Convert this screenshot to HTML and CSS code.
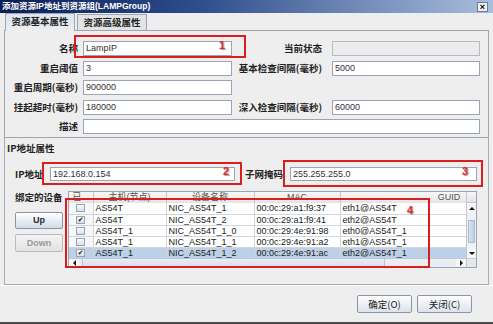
FILE: index.html
```html
<!DOCTYPE html>
<html lang="zh-CN">
<head>
    <meta charset="UTF-8">
    <title>添加资源IP地址到资源组</title>
    <link rel="stylesheet" href="styles.css">
</head>
<body>
<div class="window">
    <div class="titlebar">
        <span class="title">添加资源IP地址到资源组(LAMPGroup)</span>
        <span class="close">×</span>
    </div>

    <div class="tabs">
        <div class="tab active">资源基本属性</div>
        <div class="tab">资源高级属性</div>
    </div>

    <div class="tabpanel">
        <div class="form">
            <div class="lbl">名称</div>
            <div class="field">LampIP</div>
            <div class="lbl r">当前状态</div>
            <div class="field off"></div>

            <div class="lbl">重启阈值</div>
            <div class="field">3</div>
            <div class="lbl r">基本检查间隔(毫秒)</div>
            <div class="field">5000</div>

            <div class="lbl">重启周期(毫秒)</div>
            <div class="field">900000</div>
            <div></div>
            <div></div>

            <div class="lbl">挂起超时(毫秒)</div>
            <div class="field">180000</div>
            <div class="lbl r">深入检查间隔(毫秒)</div>
            <div class="field">60000</div>

            <div class="lbl">描述</div>
            <div class="field wide"></div>
        </div>
    </div>

    <div class="ipsec">
        <div class="sechead">IP地址属性</div>

        <div class="iprow">
            <div class="iplbl">IP地址</div>
            <div class="field ipfield">192.168.0.154</div>
            <div class="iplbl mask">子网掩码</div>
            <div class="field maskfield">255.255.255.0</div>
        </div>

        <div class="devices">
            <div class="devleft">
                <div class="devlbl">绑定的设备</div>
                <div class="btn up">Up</div>
                <div class="btn down dis">Down</div>
            </div>

            <div class="grid">
                <div class="view">
                    <table class="head">
                        <colgroup><col class="c1"><col class="c2"><col class="c3"><col class="c4"><col class="c5"></colgroup>
                        <tr><th>已...</th><th>主机(节点)</th><th>设备名称</th><th>MAC</th><th>GUID</th></tr>
                    </table>
                </div>
                <div class="hcorner"></div>

                <div class="view">
                    <table class="rows">
                        <colgroup><col class="c1"><col class="c2"><col class="c3"><col class="c4"><col class="c5"></colgroup>
                        <tr><td class="ck"><span class="box"></span></td><td>AS54T</td><td>NIC_AS54T_1</td><td>00:0c:29:a1:f9:37</td><td>eth1@AS54T</td></tr>
                        <tr><td class="ck"><span class="box on">✔</span></td><td>AS54T</td><td>NIC_AS54T_2</td><td>00:0c:29:a1:f9:41</td><td>eth2@AS54T</td></tr>
                        <tr><td class="ck"><span class="box"></span></td><td>AS54T_1</td><td>NIC_AS54T_1_0</td><td>00:0c:29:4e:91:98</td><td>eth0@AS54T_1</td></tr>
                        <tr><td class="ck"><span class="box"></span></td><td>AS54T_1</td><td>NIC_AS54T_1_1</td><td>00:0c:29:4e:91:a2</td><td>eth1@AS54T_1</td></tr>
                        <tr class="sel"><td class="ck"><span class="box on">✔</span></td><td>AS54T_1</td><td>NIC_AS54T_1_2</td><td>00:0c:29:4e:91:ac</td><td>eth2@AS54T_1</td></tr>
                    </table>
                </div>
                <div class="vbar">
                    <div class="arrow"><span class="tri-up"></span></div>
                    <div class="vtrack"><div class="vthumb"></div></div>
                    <div class="arrow"><span class="tri-down"></span></div>
                </div>

                <div class="hbar">
                    <div class="arrow"><span class="tri-left"></span></div>
                    <div class="htrack"><div class="hthumb"></div></div>
                    <div class="arrow"><span class="tri-right"></span></div>
                </div>
                <div class="corner"></div>
            </div>
        </div>
    </div>

    <div class="footer">
        <div class="fbtn">确定(O)</div>
        <div class="fbtn">关闭(C)</div>
    </div>

    <!-- annotation boxes drawn over the dialog -->
    <div class="mark m1"><span class="num n1">1</span></div>
    <div class="mark m2"><span class="num n2">2</span></div>
    <div class="mark m3"><span class="num n3">3</span></div>
    <div class="mark m4"><span class="num n4">4</span></div>
</div>
</body>
</html>
```

FILE: styles.css
```css
* {
    box-sizing: border-box;
}
body {
    margin: 0;
    background: #eeeeee;
    font-family: "Liberation Sans", "Noto Sans CJK SC", sans-serif;
    font-size: 9px;
    color: #222;
}
.window {
    position: relative;
    width: 493px;
    height: 324px;
    background: #eeeeee;
    border-bottom: 2px solid #4a4a4a;
    display: flex;
    flex-direction: column;
    overflow: hidden;
}
.titlebar {
    height: 13px;
    flex: none;
    display: flex;
    align-items: center;
    justify-content: space-between;
    padding: 0 5px 0 2px;
    background: linear-gradient(90deg, #0b1d55 0%, #2f4c8c 40%, #a8bedc 100%);
}
.title {
    color: #fff;
    font: bold 8.5px/13px "Liberation Sans", "Noto Sans CJK SC", sans-serif;
}
.close {
    width: 11px;
    height: 10px;
    background: #eef1f6;
    border: 1px solid #6c7a92;
    font: bold 9px/8px "Liberation Sans", sans-serif;
    color: #000;
    text-align: center;
}
.tabs {
    display: flex;
    flex: none;
    height: 17px;
    margin: 0 4px;
    padding-left: 1px;
    gap: 2px;
    align-items: flex-end;
}
.tab {
    width: 70px;
    height: 16px;
    border: 1px solid #9da6b3;
    border-bottom: none;
    background: #e3e3e3;
    font: bold 9.5px/15px "Noto Sans CJK SC", sans-serif;
    text-align: center;
    color: #222;
}
.tab.active {
    height: 18px;
    margin-bottom: -1px;
    position: relative;
    z-index: 1;
    background: linear-gradient(#dbe5f0, #eeeeee);
}
.tabpanel {
    flex: none;
    margin: 0 4px;
    border: 1px solid #9da6b3;
    padding: 10px 0 3px;
}
.form {
    display: grid;
    grid-template-columns: 78px 149px 100px 148px;
    grid-auto-rows: 15px;
    row-gap: 4.5px;
}
.lbl {
    font: bold 9.5px/15px "Noto Sans CJK SC", sans-serif;
    text-align: right;
    padding-right: 5px;
    white-space: nowrap;
}
.lbl.r {
    padding-right: 10px;
}
.field {
    border: 1px solid #9aa4b2;
    background: #fff;
    font: 9px/13px "Liberation Sans", sans-serif;
    padding-left: 2px;
    color: #333;
}
.field.off {
    background: #ececec;
    border-color: #b5bcc6;
}
.wide {
    grid-column: 2 / 5;
}
.ipsec {
    flex: 1;
    margin: 0 4px;
    border: 1px solid #a9adb3;
    border-top: none;
    padding: 4px 0 0;
}
.sechead {
    font: bold 9.5px/12px "Noto Sans CJK SC", sans-serif;
    padding-left: 2px;
}
.iprow {
    display: flex;
    margin-top: 13px;
    padding-left: 10px;
    height: 14px;
}
.iplbl {
    width: 35px;
    font: bold 9.5px/14px "Noto Sans CJK SC", sans-serif;
    white-space: nowrap;
}
.iplbl.mask {
    width: 45px;
    margin-left: 10px;
}
.ipfield {
    width: 185px;
    line-height: 12px;
}
.maskfield {
    width: 187px;
    line-height: 12px;
}
.devices {
    display: flex;
    margin-top: 10px;
    padding-left: 10px;
}
.devleft {
    width: 53px;
}
.devlbl {
    font: bold 9.5px/12px "Noto Sans CJK SC", sans-serif;
    white-space: nowrap;
}
.btn {
    width: 48px;
    height: 17px;
    border: 1px solid #8d96a4;
    border-radius: 2px;
    background: linear-gradient(#ffffff, #d3dbe7);
    font: bold 9px/15px "Liberation Sans", sans-serif;
    color: #1f2a3a;
    text-align: center;
}
.btn.up {
    margin-top: 9px;
}
.btn.down {
    margin-top: 5px;
    height: 18px;
    line-height: 16px;
}
.btn.dis {
    color: #9a9a9a;
    background: linear-gradient(#f4f4f4, #e2e2e2);
    border-color: #b8bcc2;
}
.grid {
    width: 409px;
    height: 77px;
    border: 1px solid #9aa4b2;
    background: #fff;
    display: grid;
    grid-template-columns: 397px 10px;
    grid-template-rows: 11px 55px 9px;
}
.view {
    overflow: hidden;
}
table {
    border-collapse: collapse;
    table-layout: fixed;
    width: 489px;
}
col.c1 { width: 24px; }
col.c2 { width: 73px; }
col.c3 { width: 88px; }
col.c4 { width: 86px; }
col.c5 { width: 218px; }
.head th {
    height: 11px;
    padding: 0;
    font: normal 9px/10px "Liberation Sans", "Noto Sans CJK SC", sans-serif;
    color: #555;
    background: linear-gradient(#f7f7f7, #e4e4e4);
    border-right: 1px solid #c4c8ce;
    border-bottom: 1px solid #c4c8ce;
    text-align: center;
    white-space: nowrap;
    overflow: hidden;
}
.hcorner {
    background: linear-gradient(#f7f7f7, #e4e4e4);
    border-left: 1px solid #c4c8ce;
    border-bottom: 1px solid #c4c8ce;
}
.rows td {
    height: 11px;
    padding: 0 0 0 2px;
    font: 9px/10px "Liberation Sans", sans-serif;
    color: #222;
    border-right: 1px solid #d2d5da;
    border-bottom: 1px solid #d2d5da;
    white-space: nowrap;
    overflow: hidden;
}
.rows td.ck {
    padding: 0;
    text-align: center;
    background: #f6f7f8;
}
.rows tr.sel td {
    background: #bcd0e7;
}
.box {
    display: inline-block;
    width: 9px;
    height: 8px;
    margin-top: 1px;
    border: 1px solid #95a1b4;
    background: linear-gradient(#fbfcfd, #d9dfe8);
    font: bold 7px/6px "DejaVu Sans", sans-serif;
    color: #1a1a1a;
    vertical-align: top;
    text-align: center;
}
.vbar {
    display: flex;
    flex-direction: column;
    border-left: 1px solid #c4c8ce;
    background: #eef2f7;
}
.arrow {
    width: 10px;
    height: 10px;
    flex: none;
    display: flex;
    align-items: center;
    justify-content: center;
    background: #f4f6f9;
}
.vbar .arrow {
    width: 9px;
}
.vtrack {
    flex: 1;
    padding-top: 7px;
}
.vthumb {
    height: 23px;
    margin: 0 1px;
    background: linear-gradient(90deg, #d6e1ef, #bfd0e6);
    border: 1px solid #a9bad2;
}
.tri-up, .tri-down, .tri-left, .tri-right {
    width: 0;
    height: 0;
    border: 3px solid transparent;
}
.tri-up { border-bottom-color: #111; border-top-width: 0; }
.tri-down { border-top-color: #111; border-bottom-width: 0; }
.tri-left { border-right-color: #111; border-left-width: 0; }
.tri-right { border-left-color: #111; border-right-width: 0; }
.hbar {
    display: flex;
    border-top: 1px solid #c4c8ce;
    background: #eaedf1;
}
.hbar .arrow {
    height: 8px;
}
.htrack {
    flex: 1;
    padding-left: 3px;
}
.hthumb {
    width: 303px;
    height: 100%;
    background: linear-gradient(#e8eef6, #d3deeb);
    border-left: 1px solid #b5c3d6;
    border-right: 1px solid #b5c3d6;
}
.corner {
    background: #e8e8e8;
    border-top: 1px solid #c4c8ce;
    border-left: 1px solid #c4c8ce;
}
.footer {
    flex: none;
    height: 37px;
    border-top: 1px solid #fff;
    display: flex;
    justify-content: flex-end;
    gap: 5px;
    padding: 9px 21px 0 0;
}
.fbtn {
    width: 55px;
    height: 18px;
    border: 1px solid #8d96a4;
    border-radius: 2px;
    background: linear-gradient(#fdfdfd, #dde3ec);
    font: 9.5px/16px "Noto Sans CJK SC", sans-serif;
    color: #222;
    text-align: center;
}
.mark {
    position: absolute;
    border: 2px solid #d91e1e;
}
.m1 { left: 74px; top: 35px; width: 172px; height: 23px; }
.m2 { left: 42px; top: 162px; width: 200px; height: 23px; }
.m3 { left: 283px; top: 160px; width: 200px; height: 27px; }
.m4 { left: 65px; top: 198px; width: 365px; height: 70px; }
.num {
    position: absolute;
    color: #e0282a;
    font: bold 11px/11px "Liberation Sans", sans-serif;
    text-shadow: 1px 1px 1px #9a9a9a;
}
.n1 { left: 143px; top: 3px; }
.n2 { left: 179px; top: 2px; }
.n3 { left: 177px; top: 4px; }
.n4 { left: 340px; top: 5px; }
```
